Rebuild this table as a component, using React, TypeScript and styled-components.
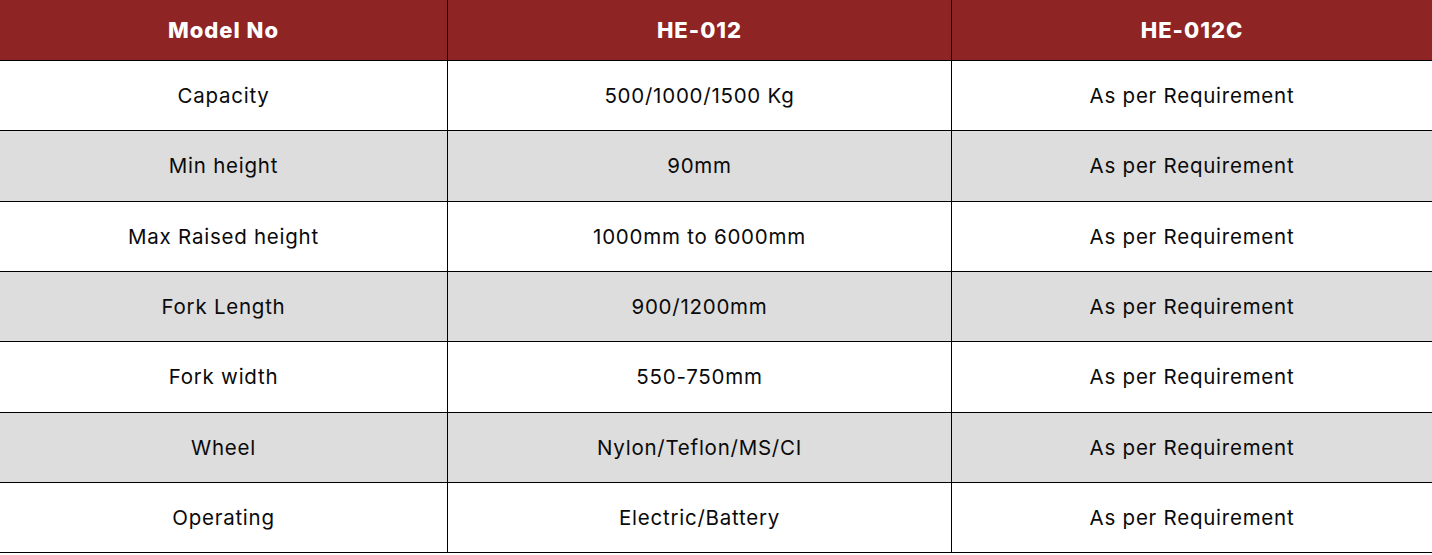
import React from 'react';
import styled, { createGlobalStyle } from 'styled-components';

const GlobalStyle = createGlobalStyle`
  html, body {
    margin: 0;
    padding: 0;
    background: #ffffff;
  }
  body {
    font-family: "Inter", "Noto Sans", sans-serif;
  }
`;

const Table = styled.div`
  width: 100%;
  display: flex;
  flex-direction: column;
`;

const Row = styled.div<{ $shade?: boolean; $head?: boolean }>`
  display: grid;
  grid-template-columns: 447px 504px 1fr;
  height: ${(p) => (p.$head ? '61px' : '70.33px')};
  box-sizing: border-box;
  border-bottom: 1px solid #000;
  background: ${(p) => (p.$head ? '#8f2424' : p.$shade ? '#dddddd' : '#ffffff')};
`;

const Cell = styled.div<{ $head?: boolean }>`
  display: flex;
  align-items: center;
  justify-content: center;
  font-size: ${(p) => (p.$head ? '22px' : '20.5px')};
  letter-spacing: ${(p) => (p.$head ? '1px' : '0.75px')};
  font-weight: ${(p) => (p.$head ? 800 : 400)};
  color: ${(p) => (p.$head ? '#ffffff' : '#0a0a0a')};
  & + & {
    border-left: 1px solid #000;
  }
`;

const rows: [string, string, string][] = [
  ['Capacity', '500/1000/1500 Kg', 'As per Requirement'],
  ['Min height', '90mm', 'As per Requirement'],
  ['Max Raised height', '1000mm to 6000mm', 'As per Requirement'],
  ['Fork Length', '900/1200mm', 'As per Requirement'],
  ['Fork width', '550-750mm', 'As per Requirement'],
  ['Wheel', 'Nylon/Teflon/MS/CI', 'As per Requirement'],
  ['Operating', 'Electric/Battery', 'As per Requirement'],
];

const App: React.FC = () => {
  return (
    <>
      <GlobalStyle />
      <Table>
        <Row $head>
          <Cell $head>Model No</Cell>
          <Cell $head>HE-012</Cell>
          <Cell $head>HE-012C</Cell>
        </Row>
        {rows.map((r, i) => (
          <Row key={r[0]} $shade={i % 2 === 1}>
            {r.map((c, j) => (
              <Cell key={j}>{c}</Cell>
            ))}
          </Row>
        ))}
      </Table>
    </>
  );
};

export default App;
